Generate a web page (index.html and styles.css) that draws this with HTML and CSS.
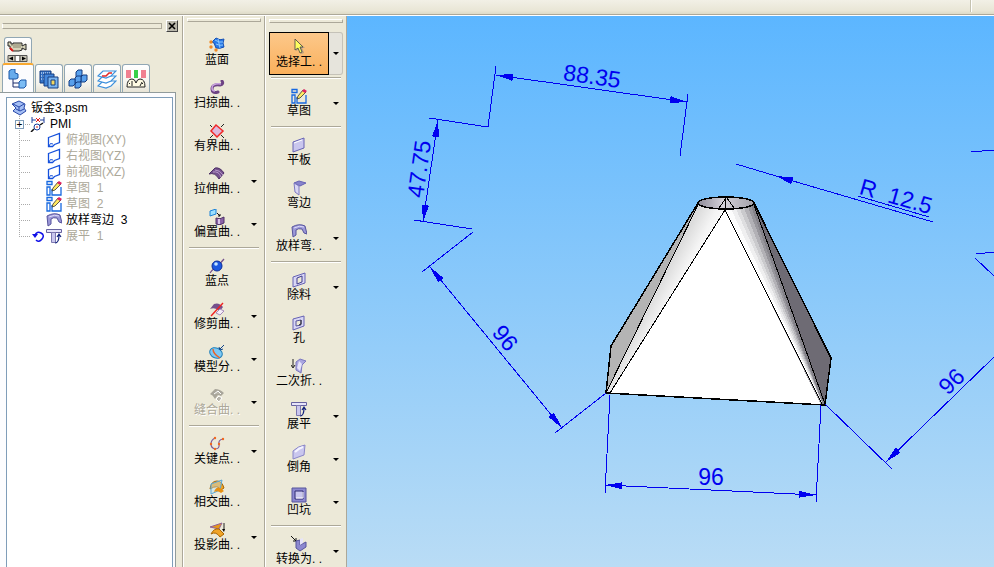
FILE: index.html
```
<!DOCTYPE html>
<html lang="zh-CN">
<head>
    <meta charset="UTF-8">
    <meta name="viewport" content="width=device-width, initial-scale=1.0">
    <title>钣金3.psm</title>
    <link rel="stylesheet" href="styles.css">
</head>
<body>

<!-- Icons -->
<svg class="icon-defs" aria-hidden="true">
    <symbol id="i-blue-surface" viewBox="0 0 16 16"><path d="M3 5L7 1q4 3 8 1l-1 4 1 4q-4 2-8 1L5 6z" fill="#2a7be8" stroke="#1450b4"/><path d="M6 3q4 3 8 2M7 7q4 2 7 1M9 2l2 9" stroke="#8cc8ff" fill="none"/><g fill="#f08a24"><circle cx="2" cy="5" r="1.7"/><circle cx="2" cy="10" r="1.7"/><circle cx="7" cy="13" r="1.7"/></g></symbol>
    <symbol id="i-sweep" viewBox="0 0 16 16"><path d="M13 1q2 3-2 4-8-1-8 4 0 5 6 3" fill="none" stroke="#6d4484" stroke-width="3" stroke-linecap="round"/><path d="M12 4q-9-1-9 4 0 3 3 3" fill="none" stroke="#c9a4e0" stroke-width="1.5"/></symbol>
    <symbol id="i-bounded" viewBox="0 0 16 16"><path d="M2 8l5-6 7 6-6 6z" fill="#dcb8dc" stroke="#f02828" stroke-width="1.5"/><path d="M1 2l2 2M15 1l-3 3M1 15l3-3M15 15l-3-3" stroke="#222"/></symbol>
    <symbol id="i-extrude" viewBox="0 0 16 16"><path d="M0 8L6 2q5-1 9 5l-5 6Q6 6 0 8z" fill="#74508c" stroke="#4d3066"/><path d="M4 6q6-1 8 5M6 4q5 0 8 5" stroke="#b89acb" fill="none"/></symbol>
    <symbol id="i-offset" viewBox="0 0 16 16"><path d="M1 2l6-2v5L1 7z" fill="#9be0ff" stroke="#1a82d8"/><path d="M8 4l3 3M9 7h2V5" stroke="#111" fill="none"/><path d="M7 9q4 2 8-1v6q-4 3-8 1z" fill="#8a62a6" stroke="#4d3066"/><path d="M10 10v5" stroke="#d8c4e8" stroke-width="2"/></symbol>
    <symbol id="i-point" viewBox="0 0 16 16"><path d="M1 15q2-3 5-5T15 1" stroke="#74508c" stroke-width="1.3" fill="none"/><circle cx="8" cy="8" r="5" fill="#1c58e0" stroke="#0b2c98"/><circle cx="7" cy="6" r="1.8" fill="#c4e4ff"/></symbol>
    <symbol id="i-trim" viewBox="0 0 16 16"><path d="M1 8L5 3q5-2 9 3l-3 4Q6 6 1 8z" fill="#74508c"/><path d="M7 12l4-4 4 2-4 4z" fill="#f4ecf8" stroke="#a68aba"/><path d="M2 15L14 2" stroke="#f02020" stroke-width="1.4"/></symbol>
    <symbol id="i-split" viewBox="0 0 16 16"><ellipse cx="7" cy="9" rx="6.5" ry="5" transform="rotate(25 7 9)" fill="#7cc8f4" stroke="#2480b8"/><path d="M4 5q0 5 7 9" stroke="#f06020" stroke-width="1.4" fill="none"/><path d="M15 1l-4 4M10 3l1 3 3-1" stroke="#114488" fill="none"/></symbol>
    <symbol id="i-stitch" viewBox="0 0 16 16"><path d="M1 7l5-5q5 0 9 4l-3 3-3-1-3 4q-2-4-5-5z" fill="#a9a69b"/><path d="M5 7l4-3 3 3M7 12l3-3 3 2-3 4z" stroke="#fff" fill="#b7b4a9"/></symbol>
    <symbol id="i-keycurve" viewBox="0 0 16 16"><path d="M6 2Q2 4 2 8t4 5q5 0 4-5-1-4 4-5" fill="none" stroke="#7e5a96" stroke-width="1.2"/><g fill="#f06820"><circle cx="6" cy="2" r="1.2"/><circle cx="2" cy="8" r="1.2"/><circle cx="6" cy="13" r="1.2"/><circle cx="10" cy="8" r="1.2"/><circle cx="14" cy="3" r="1.2"/></g></symbol>
    <symbol id="i-intersect" viewBox="0 0 16 16"><path d="M1 10q1-8 7-8 5 0 7 7l-3 2Q9 5 1 10z" fill="#f0a428" stroke="#a86400"/><path d="M2 5l11-4-2 10-9 4z" fill="#b8e0f4" fill-opacity=".4" stroke="#58a8d8"/><path d="M5 13q2-6 6-4l4 3-3 2q-3-3-7-1z" fill="#e89010"/></symbol>
    <symbol id="i-project" viewBox="0 0 16 16"><path d="M1 5l12-4-3 6z" fill="#e89818" stroke="#906098"/><path d="M15 1v7" stroke="#222"/><path d="M13 7l2 3 1-3z"/><path d="M2 12q3-6 8-5l5 5-4 3Q7 9 2 12z" fill="#f0a428" stroke="#a86400"/></symbol>
    <symbol id="i-cursor" viewBox="0 0 16 16"><path d="M5 1v11l3-2 2 5 3-1-2-5h3z" fill="#888" opacity=".6"/><path d="M4 0v11l3-2 2 5 2-1-2-5h3z" fill="#ffff60" stroke="#444" stroke-width=".8"/></symbol>
    <symbol id="i-sketch" viewBox="0 0 16 16"><path d="M1 1.500h5v3h-5zM1 7h3v8h-3zM6 9v6h9V7" fill="none" stroke="#1668e0" stroke-width="1.300"/><path d="M6 11l1-3 5-6 3 2-6 6z" fill="#ffe860" stroke="#333" stroke-width=".8"/><path d="M11 3l2-2 3 2-2 2z" fill="#e02060"/></symbol>
    <symbol id="i-plate" viewBox="0 0 16 16"><path d="M2 5l11-4v10L2 15z" fill="#c9c6ee" stroke="#6662b4"/><path d="M3 6l8-3" stroke="#fff"/></symbol>
    <symbol id="i-flange" viewBox="0 0 16 16"><path d="M3 3l5-2 7 2-6 3z" fill="#8884cc" stroke="#6662b4"/><path d="M3 3l5 3v9l-4-3z" fill="#d8d6f4" stroke="#7c78c0"/></symbol>
    <symbol id="i-loft" viewBox="0 0 16 16"><path d="M1 4q7-4 13-1l2 8-3-1-2-4q-4-1-6 1v5l-3 2z" fill="#9c98d8" stroke="#57549c"/><path d="M3 5q6-3 10-1" stroke="#dedcf8" fill="none"/></symbol>
    <symbol id="i-cutout" viewBox="0 0 16 16"><path d="M2 5l12-4v10L2 15z" fill="#d8d6f4" stroke="#6662b4"/><path d="M6 6l5-2v6l-5 2z" fill="#ece9d8" stroke="#403c90"/></symbol>
    <symbol id="i-hole" viewBox="0 0 16 16"><path d="M2 4l11-3v10L2 15z" fill="#d8d6f4" stroke="#6662b4"/><path d="M5 6l5-1v5l-5 1z" fill="#ece9d8" stroke="#57549c"/><path d="M8 10l2-1V5" stroke="#222" fill="none"/></symbol>
    <symbol id="i-jog" viewBox="0 0 16 16"><path d="M5 4l4-3 6 2-4 4-1 8-5-3z" fill="#aaa6e0" stroke="#7c78c0"/><path d="M8 3l-2 7 3 3 2-7" fill="#e6e4fa"/><path d="M2 1v8M0 7l2 3 2-3" stroke="#222" fill="none"/></symbol>
    <symbol id="i-flat" viewBox="0 0 16 16"><path d="M.5 1.500h15v3h-15z" fill="#e6e4fa" stroke="#6662a0"/><path d="M5.500 4.500h4v10h-4z" fill="#c9c6ee" stroke="#7c78b0"/><path d="M9 15q4 0 4-8M11 9l2-3 2 3" fill="none" stroke="#10207c" stroke-width="1.200"/></symbol>
    <symbol id="i-corner" viewBox="0 0 16 16"><path d="M2 7q5-5 12-6l-1 10-11 4z" fill="#c9c6ee" stroke="#8a86c8"/><path d="M4 8q4-4 8-5" stroke="#f4f3ff" stroke-width="2" fill="none"/></symbol>
    <symbol id="i-dimple" viewBox="0 0 16 16"><path d="M1 1h14v14H1z" fill="#8c88d0" stroke="#57549c"/><path d="M4 4h8v8H4z" fill="#c9c6ee" stroke="#302c70"/><path d="M5 11h7V5" stroke="#fff" fill="none"/></symbol>
    <symbol id="i-convert" viewBox="0 0 16 16"><path d="M0 0l5 5M5 2v3H2" stroke="#111" fill="none"/><path d="M5 5l4-1v5l6-3v5l-6 4-4-3z" fill="#8c88d0" stroke="#57549c"/><path d="M9 3l3-1v5l-3 2z" fill="#e6e4fa"/></symbol>
    <symbol id="i-view" viewBox="0 0 16 16"><path d="M2.500 5.500l11-4v9l-5 2-2 2h-4z" fill="#fff" stroke="#1450dc" stroke-width="1.300"/><path d="M3 14q1-4 4-2" fill="none" stroke="#1450dc"/></symbol>
    <symbol id="i-part" viewBox="0 0 16 16"><path d="M1 4l7-3 6 3-1 4 2 3-6 4-7-4 3-3z" fill="#a4bef4" stroke="#2848a8"/><path d="M2 4l6 3 5-3M5 9l4 2 4-2M8 7v4" fill="none" stroke="#2848a8"/></symbol>
    <symbol id="i-pmi" viewBox="0 0 16 16"><path d="M2 1v6M14 1v6M2 4h4M10 4h4" stroke="#1c3c9c"/><path d="M6 2l4 4M10 2l-4 4" stroke="#e01818"/><circle cx="7" cy="11" r="3" fill="none" stroke="#1c3c9c"/><path d="M1 16l3-3M10 9l3-2" stroke="#111" stroke-width="1.500"/><path d="M7 10v2" stroke="#e01818"/></symbol>
    <symbol id="i-roll" viewBox="0 0 12 12"><path d="M3 5q2-4 6-2t1 6-6 1" fill="none" stroke="#1010e8" stroke-width="1.500"/><path d="M0 4h6L3 8z" fill="#1010e8"/></symbol>
    <symbol id="i-camera" viewBox="0 0 22 22"><path d="M1 2h3v2h2V3h9v3l4-2v6l-4-2v2l-3 1H6L3 9V6H1z" fill="#d6d3b8" stroke="#222"/><path d="M4 5h11M6 7h8" stroke="#86826a"/><path d="M3 8l3 3" stroke="#e01818" stroke-width="2"/><path d="M1 15.500h19v6H1z" fill="#c8c5b6" stroke="#555"/><path d="M2 18.500l4-2v4zM19 18.500l-4-2v4z"/><path d="M8 16v5M13 16v5" stroke="#555"/><path d="M9 16h3v5H9z" fill="#fff"/></symbol>
    <symbol id="i-tree" viewBox="0 0 20 20"><path d="M5 9v9h7M5 14h6" fill="none" stroke="#1c2c6c"/><path d="M1 2l3-2h3v4l3 1v4l-2 1H1z" fill="#68acec" stroke="#1c58a8"/><path d="M11 13l2-2h5v6l-2 2h-5z" fill="#7cbcf4" stroke="#1c58a8"/></symbol>
    <symbol id="i-library" viewBox="0 0 20 20"><path d="M1 2h11v12H1z" fill="#3474c8" stroke="#143c80"/><path d="M2 4h9M2 7h3M2 10h3" stroke="#fff" stroke-dasharray="1 1"/><path d="M5 5h10v12H5z" fill="#4488dc" stroke="#143c80"/><path d="M9 8h10v11H9z" fill="#78b4f0" stroke="#143c80"/><path d="M12 11h4v5h-4z" fill="#f4d860" stroke="#143c80"/></symbol>
    <symbol id="i-family" viewBox="0 0 20 20"><g fill="#58a0ec" stroke="#143c80"><path d="M8 3l2-2h4v5l-2 2H8z"/><path d="M13 8l2-2h4v5l-2 2h-4z"/><path d="M7 9l2-2h4v5l-2 2H7z"/><path d="M1 12l2-2h4v5l-2 2H1z"/><path d="M7 15l2-2h4v4l-2 2H7z"/></g></symbol>
    <symbol id="i-layers" viewBox="0 0 20 20"><g fill="#fff" stroke="#3c90dc" stroke-width="1.200"><path d="M1 17l5-5h13l-5 5-5 2z"/><path d="M1 12l5-5h13l-5 5-5 2z"/><path d="M1 7l5-5h13l-5 5-5 2z"/></g><path d="M5 7h4l3-3h3" stroke="#e02828" stroke-width="1.500" fill="none"/></symbol>
    <symbol id="i-gauge" viewBox="0 0 20 20"><path d="M0 1h5v8H0z" fill="#f08090"/><path d="M5 1h3v8H5zM12 1h3v8h-3z" fill="#fff"/><path d="M8 1h4v8H8z" fill="#38d048"/><path d="M15 1h5v8h-5z" fill="#f08090"/><path d="M1 18q0-8 5-8 3 0 4 4 1-4 4-4 5 0 5 8z" fill="#fffbe4" stroke="#222"/><path d="M6 17V12M14 17l2-4M3 14l1 1M17 14l-1 1" stroke="#222"/></symbol>
</svg>

<div class="app">
    <header class="top-bar"></header>

    <main class="workspace">
        <!-- Feature tree -->
        <aside class="path-finder">
            <div class="panel-head">
                <div class="grip"></div>
                <button class="close" aria-label="关闭"><svg viewBox="0 0 8 8"><path d="M1 1l6 6M7 1l-6 6" stroke="#000" stroke-width="1.600"/></svg></button>
            </div>
            <div class="tabs tabs-upper">
                <button class="tab" aria-label="传感器"><svg class="icon-22"><use href="#i-camera"/></svg></button>
            </div>
            <div class="tabs">
                <button class="tab active" aria-label="路径查找器"><svg class="icon-20"><use href="#i-tree"/></svg></button>
                <button class="tab" aria-label="零件库"><svg class="icon-20"><use href="#i-library"/></svg></button>
                <button class="tab" aria-label="零件族"><svg class="icon-20"><use href="#i-family"/></svg></button>
                <button class="tab" aria-label="图层"><svg class="icon-20"><use href="#i-layers"/></svg></button>
                <button class="tab" aria-label="仪表"><svg class="icon-20"><use href="#i-gauge"/></svg></button>
            </div>
            <div class="tab-page">
                <div class="tree">
                    <div class="row root"><svg class="icon"><use href="#i-part"/></svg>钣金3.psm</div>
                    <ul>
                        <li class="row pmi"><span class="branch"><button class="expand" aria-label="展开">+</button></span><span class="state"><svg class="icon"><use href="#i-pmi"/></svg></span>PMI</li>
                        <li class="row dim"><span class="branch"></span><span class="state"></span><svg class="icon"><use href="#i-view"/></svg>俯视图(XY)</li>
                        <li class="row dim"><span class="branch"></span><span class="state"></span><svg class="icon"><use href="#i-view"/></svg>右视图(YZ)</li>
                        <li class="row dim"><span class="branch"></span><span class="state"></span><svg class="icon"><use href="#i-view"/></svg>前视图(XZ)</li>
                        <li class="row dim"><span class="branch"></span><span class="state"></span><svg class="icon"><use href="#i-sketch"/></svg>草图&nbsp; 1</li>
                        <li class="row dim"><span class="branch"></span><span class="state"></span><svg class="icon"><use href="#i-sketch"/></svg>草图&nbsp; 2</li>
                        <li class="row"><span class="branch"></span><span class="state"></span><svg class="icon"><use href="#i-loft"/></svg>放样弯边&nbsp; 3</li>
                        <li class="row dim"><span class="branch"></span><span class="state"><svg class="icon-12"><use href="#i-roll"/></svg></span><svg class="icon"><use href="#i-flat"/></svg>展平&nbsp; 1</li>
                    </ul>
                </div>
            </div>
        </aside>

        <!-- Surface tools -->
        <nav class="tools">
            <div class="grip"></div>
            <div class="group">
                <div class="tool"><button class="cmd"><svg class="icon"><use href="#i-blue-surface"/></svg>蓝面</button></div>
                <div class="tool"><button class="cmd"><svg class="icon"><use href="#i-sweep"/></svg>扫掠曲. .</button></div>
                <div class="tool"><button class="cmd"><svg class="icon"><use href="#i-bounded"/></svg>有界曲. .</button></div>
                <div class="tool"><button class="cmd"><svg class="icon"><use href="#i-extrude"/></svg>拉伸曲. .</button><button class="more" aria-label="更多拉伸"></button></div>
                <div class="tool"><button class="cmd"><svg class="icon"><use href="#i-offset"/></svg>偏置曲. .</button><button class="more" aria-label="更多偏置"></button></div>
            </div>
            <div class="group">
                <div class="tool"><button class="cmd"><svg class="icon"><use href="#i-point"/></svg>蓝点</button></div>
                <div class="tool"><button class="cmd"><svg class="icon"><use href="#i-trim"/></svg>修剪曲. .</button><button class="more" aria-label="更多修剪"></button></div>
                <div class="tool"><button class="cmd"><svg class="icon"><use href="#i-split"/></svg>模型分. .</button><button class="more" aria-label="更多分割"></button></div>
                <div class="tool"><button class="cmd" disabled><svg class="icon"><use href="#i-stitch"/></svg>缝合曲. .</button><button class="more" aria-label="更多缝合"></button></div>
            </div>
            <div class="group">
                <div class="tool"><button class="cmd"><svg class="icon"><use href="#i-keycurve"/></svg>关键点. .</button><button class="more" aria-label="更多曲线"></button></div>
                <div class="tool"><button class="cmd"><svg class="icon"><use href="#i-intersect"/></svg>相交曲. .</button></div>
                <div class="tool"><button class="cmd"><svg class="icon"><use href="#i-project"/></svg>投影曲. .</button><button class="more" aria-label="更多投影"></button></div>
            </div>
        </nav>

        <!-- Sheet metal tools -->
        <nav class="tools sheet">
            <div class="grip"></div>
            <div class="group">
                <div class="tool selected"><button class="cmd"><svg class="icon"><use href="#i-cursor"/></svg>选择工. .</button><button class="more" aria-label="更多选择"></button></div>
            </div>
            <div class="group">
                <div class="tool"><button class="cmd"><svg class="icon"><use href="#i-sketch"/></svg>草图</button><button class="more" aria-label="更多草图"></button></div>
            </div>
            <div class="group">
                <div class="tool"><button class="cmd"><svg class="icon"><use href="#i-plate"/></svg>平板</button></div>
                <div class="tool"><button class="cmd"><svg class="icon"><use href="#i-flange"/></svg>弯边</button></div>
                <div class="tool"><button class="cmd"><svg class="icon"><use href="#i-loft"/></svg>放样弯. .</button><button class="more" aria-label="更多弯边"></button></div>
            </div>
            <div class="group">
                <div class="tool"><button class="cmd"><svg class="icon"><use href="#i-cutout"/></svg>除料</button><button class="more" aria-label="更多除料"></button></div>
                <div class="tool"><button class="cmd"><svg class="icon"><use href="#i-hole"/></svg>孔</button></div>
                <div class="tool"><button class="cmd"><svg class="icon"><use href="#i-jog"/></svg>二次折. .</button></div>
                <div class="tool"><button class="cmd"><svg class="icon"><use href="#i-flat"/></svg>展平</button><button class="more" aria-label="更多展平"></button></div>
                <div class="tool"><button class="cmd"><svg class="icon"><use href="#i-corner"/></svg>倒角</button><button class="more" aria-label="更多倒角"></button></div>
                <div class="tool"><button class="cmd"><svg class="icon"><use href="#i-dimple"/></svg>凹坑</button><button class="more" aria-label="更多凹坑"></button></div>
            </div>
            <div class="group">
                <div class="tool"><button class="cmd"><svg class="icon"><use href="#i-convert"/></svg>转换为. .</button><button class="more" aria-label="更多转换"></button></div>
            </div>
        </nav>

        <!-- Model view -->
        <section class="viewport">
            <svg class="model" viewBox="347 16 647 551" preserveAspectRatio="xMinYMin slice">
                <defs>
                    <linearGradient id="left-cone" gradientUnits="userSpaceOnUse" x1="656" y1="290" x2="684" y2="305">
                        <stop offset="0" stop-color="#dcdcdc"/>
                        <stop offset=".5" stop-color="#f4f4f4"/>
                        <stop offset="1" stop-color="#fff"/>
                    </linearGradient>
                    <linearGradient id="inside" x1="0" x2="1">
                        <stop offset="0" stop-color="#8e8b98"/>
                        <stop offset=".45" stop-color="#d4d2da"/>
                        <stop offset="1" stop-color="#a2a0a8"/>
                    </linearGradient>
                    <marker id="arrow" viewBox="0 0 17 7" refX="17" refY="3.5" markerWidth="17" markerHeight="7" markerUnits="userSpaceOnUse" orient="auto-start-reverse">
                        <path d="M0 0l17 3.500L0 7z" fill="#0000f0"/>
                    </marker>
                </defs>

                <!-- Faces -->
                <path d="M698 204L611 346 606 393z" fill="#b4b4b4"/>
                <path d="M754 204L831 358 825 405z" fill="#6e6b74"/>
                <path d="M725 210L610 393 821 405z" fill="#fff"/>
                <path d="M698 204L725 210 610 394 606 393z" fill="url(#left-cone)"/>
                <path d="M725 210l29-5 71 200h-4z" fill="#b2b1b6"/>
                <path d="M725 210l6-1 92 196z" fill="#fdfdfd"/>
                <path d="M731 209l5 0 87 196z" fill="#efeff0"/>
                <path d="M736 209l4 0 83 196z" fill="#dedee0"/>
                <path d="M740 209l4-1 79 197z" fill="#cacacd"/>
                <path d="M744 208l4-1 75 198z" fill="#b2b1b6"/>
                <path d="M748 207l3-1 72 199z" fill="#97969c"/>
                <path d="M751 206l3-2 71 201h-2z" fill="#85838a"/>
                <ellipse cx="726" cy="203" rx="28" ry="6" fill="url(#inside)" stroke="#000" stroke-width="1.500"/>
                <g class="edge">
                    <path d="M725 197v13M726 198l-7 10M727 198l7 10"/>
                    <path d="M725 210L610 393M725 210L822 404M698 205L606 393M754 205L825 404"/>
                    <path class="outline" d="M698 203L611 346 606 393 825 405 831 358 754 203"/>
                </g>

                <!-- Dimensions -->
                <g class="dimension">
                    <path d="M496 66L488 127 429 118M688 94L680 156M414 220L472 229M473 232L422 272M606 393L555 433M610 395L605 493M821 405L816 502M825 404L892 469M971 152L994 150M976 254L994 252M975 258L994 276M858 196L929 217"/>
                    <path class="measure" d="M496 75L687 102"/>
                    <path class="measure" d="M438 120L423 222"/>
                    <path class="measure" d="M430 267L562 428"/>
                    <path class="measure" d="M605 485L816 495"/>
                    <path class="leader" d="M994 357L886 462"/>
                    <path class="leader" d="M933 222L776 176"/>
                    <path d="M776 176L736 164"/>
                </g>
                <g class="value">
                    <text transform="translate(591 84) rotate(8)">88.35</text>
                    <text transform="translate(427 170) rotate(-82)">47.75</text>
                    <text transform="translate(499 343) rotate(51)">96</text>
                    <text transform="translate(711 485)">96</text>
                    <text transform="translate(957 387) rotate(-44)">96</text>
                    <text transform="translate(894 204) rotate(16)">R&nbsp; 12.5</text>
                </g>
            </svg>
        </section>
    </main>
</div>

</body>
</html>
```
FILE: styles.css
```
*,
*::before,
*::after {
    box-sizing: border-box;
}
body {
    margin: 0;
    font-family: "Liberation Sans", "Noto Sans CJK SC", sans-serif;
    font-size: 12px;
    line-height: 14px;
    color: #000;
    background-color: #ece9d8;
}
button {
    margin: 0;
    padding: 0;
    border: none;
    background: none;
    font: inherit;
    color: inherit;
}
svg {
    display: block;
}
.icon-defs {
    position: absolute;
    width: 0;
    height: 0;
}
.icon {
    width: 16px;
    height: 16px;
    flex: none;
}
.icon-12 {
    width: 12px;
    height: 12px;
}
.icon-20 {
    width: 20px;
    height: 20px;
}
.icon-22 {
    width: 22px;
    height: 22px;
}
.app {
    display: flex;
    flex-direction: column;
    height: 100vh;
    overflow: hidden;
}
.top-bar {
    flex: none;
    height: 15px;
    padding-right: 22px;
    background: linear-gradient(#f2f0e6, #e9e6d6 75%, #dedbc8);
    border-bottom: 1px solid #aca899;
    display: flex;
    justify-content: flex-end;
}
.top-bar::after {
    content: "";
    width: 2px;
    height: 12px;
    border-left: 1px solid #c5c2b0;
    border-right: 1px solid #fff;
}
.workspace {
    flex: 1;
    min-height: 0;
    display: flex;
    border-top: 1px solid #fff;
}
.grip {
    height: 4px;
    border: 1px solid #fff;
    border-right-color: #aca899;
    border-bottom-color: #aca899;
}

/* Feature tree */
.path-finder {
    flex: none;
    width: 183px;
    display: flex;
    flex-direction: column;
    border-right: 1px solid #aca899;
}
.panel-head {
    display: flex;
    align-items: center;
    gap: 4px;
    padding: 4px 4px 0 2px;
}
.panel-head .grip {
    flex: 1;
    height: 6px;
    border-top-color: #aca899;
}
.close {
    width: 12px;
    height: 12px;
    padding: 1px;
    background-color: #b8b6aa;
    border: 1px solid #fff;
    border-right-color: #404040;
    border-bottom-color: #404040;
}
.tabs {
    display: flex;
    align-items: flex-end;
    gap: 1px;
    padding-left: 2px;
}
.tabs-upper {
    padding: 5px 0 0 4px;
}
.tab {
    width: 28px;
    height: 28px;
    display: flex;
    align-items: center;
    justify-content: center;
    background: linear-gradient(#fff, #f4f3ec 70%, #e6e3d6);
    border: 1px solid #91a7b4;
    border-bottom: none;
    border-radius: 3px 3px 0 0;
}
.tab.active {
    width: 32px;
    height: 30px;
    margin-bottom: -1px;
    background: #fcfcfe;
    border-top: 2px solid #f8a830;
}
.tabs-upper .tab {
    height: 26px;
}
.tab-page {
    flex: 1;
    min-height: 0;
    display: flex;
    margin-right: 6px;
    padding: 4px 2px 0 6px;
    background-color: #fcfcfe;
    border: 1px solid #919b9c;
    border-left: none;
    border-bottom: none;
}
.tree {
    flex: 1;
    padding: 2px 0 0 4px;
    background-color: #fff;
    border: 1px solid #7f9db9;
    border-bottom: none;
}
.tree ul {
    margin: 0 0 0 4px;
    padding: 0;
    list-style: none;
}
.row {
    display: flex;
    align-items: center;
    gap: 4px;
    height: 16px;
    line-height: 16px;
    white-space: nowrap;
}
.tree li {
    gap: 0;
}
.tree li > .icon {
    margin-right: 4px;
}
.dim {
    color: #aca899;
}
.branch {
    width: 15px;
    height: 16px;
    flex: none;
    background:
        repeating-linear-gradient(90deg, #aaa 0 1px, transparent 1px 2px) 4px 8px / 11px 1px no-repeat,
        repeating-linear-gradient(#aaa 0 1px, transparent 1px 2px) 4px 0 / 1px 16px no-repeat;
}
li:last-child .branch {
    background-size: 11px 1px, 1px 8px;
}
.expand {
    display: block;
    width: 9px;
    height: 9px;
    margin-top: 4px;
    border: 1px solid #7f9db9;
    background-color: #fff;
    font-size: 10px;
    line-height: 7px;
}
.state {
    width: 16px;
    flex: none;
    display: flex;
    justify-content: center;
}
.pmi .state {
    margin-right: 4px;
}

/* Tool columns */
.tools {
    flex: none;
    width: 82px;
    display: flex;
    flex-direction: column;
    padding: 2px 3px 0;
    border-left: 1px solid #fff;
    border-right: 1px solid #aca899;
}
.tools .grip {
    flex: none;
    margin-bottom: 9px;
}
.tools.sheet {
    padding-top: 3px;
}
.group + .group::before {
    content: "";
    display: block;
    height: 2px;
    margin: 1px 2px 3px;
    border-top: 1px solid #aca899;
    border-bottom: 1px solid #fff;
}
.tool {
    display: flex;
    height: 43px;
}
.cmd {
    width: 60px;
    display: flex;
    flex-direction: column;
    align-items: center;
    padding-top: 6px;
    white-space: nowrap;
}
.cmd:disabled {
    color: #aca899;
    text-shadow: 1px 1px #fff;
}
.more {
    flex: 1;
    display: flex;
    align-items: center;
    justify-content: center;
}
.more::after {
    content: "";
    border: 3px solid transparent;
    border-top-color: #000;
    border-bottom: none;
}
.selected {
    margin-bottom: 1px;
}
.selected .cmd {
    border: 1px solid #000;
    background: linear-gradient(#fcc88a, #fab05c);
}
.selected .more {
    border: 1px solid #c5c2b8;
    border-left: none;
    border-radius: 0 3px 3px 0;
    background-color: #e6e4dc;
}

/* Model view */
.viewport {
    flex: 1;
    min-width: 0;
    background: linear-gradient(#5cb6ff, #b9dcf5);
}
.model {
    width: 100%;
    height: 100%;
    shape-rendering: crispEdges;
}
.edge {
    fill: none;
    stroke: #000;
    stroke-width: 1;
}
.outline {
    stroke-width: 1.5;
}
.dimension {
    fill: none;
    stroke: #0000f0;
    stroke-width: 1;
}
.measure {
    marker-start: url(#arrow);
    marker-end: url(#arrow);
}
.leader {
    marker-end: url(#arrow);
}
.value {
    font-size: 23px;
    fill: #0000f0;
    text-anchor: middle;
}
```
